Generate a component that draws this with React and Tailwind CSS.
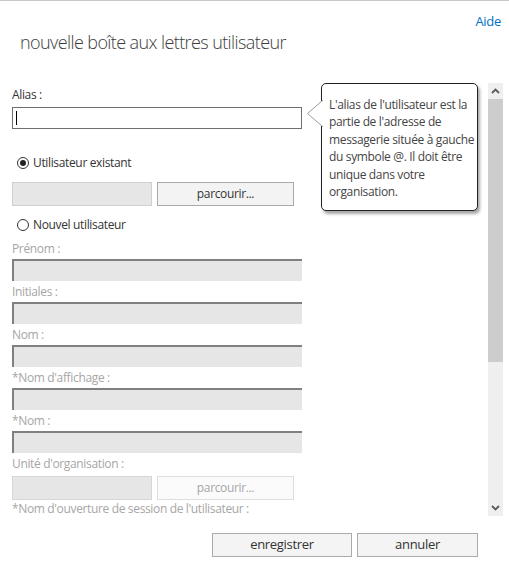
import React from "react";

const FONT = { fontFamily: '"Segoe UI", "Open Sans", "Noto Sans", sans-serif' };

function Radio({ checked, label }) {
  return (
    <div className="flex items-center h-[20px] pl-[5px] gap-[4px] text-[12px] tracking-[-0.35px] text-[#333]">
      <span className="w-[12px] h-[12px] rounded-full border border-[#333] bg-white flex items-center justify-center">
        {checked && <span className="w-[6px] h-[6px] rounded-full bg-[#222]" />}
      </span>
      <span>{label}</span>
    </div>
  );
}

function DisabledField({ label }) {
  return (
    <div>
      <div className="h-[21px] leading-[21px] text-[12px] tracking-[-0.35px] text-[#a6a6a6]">{label}</div>
      <div className="w-[290px] h-[22px] bg-[#e6e6e6] border-t-2 border-l-2 border-[#808080]" />
    </div>
  );
}

function Chevron({ down }) {
  return (
    <svg width="9" height="6" viewBox="0 0 9 6" className={down ? "rotate-180" : ""}>
      <path d="M1 5 L4.5 1.5 L8 5" fill="none" stroke="#5a5a5a" strokeWidth="1.8" />
    </svg>
  );
}

export default function App() {
  return (
    <div className="w-[509px] h-[565px] bg-white border-t border-[#c8c8c8] flex flex-col overflow-hidden" style={FONT}>
      {/* header */}
      <div className="h-[82px]">
        <div className="flex justify-end pr-[8px] pt-[12px] text-[13px] tracking-[-0.3px] text-[#0072c6] leading-[16px]">Aide</div>
        <h1 className="pl-[20px] mt-[1px] text-[18px] font-light tracking-[-0.6px] text-[#3c3c3c] leading-[24px]">
          nouvelle boîte aux lettres utilisateur
        </h1>
      </div>

      {/* scroll region */}
      <div className="flex h-[433px]">
        <div className="relative flex-1 overflow-hidden pl-[12px]">
          <div className="h-[21px] mt-[1px] leading-[21px] text-[12px] tracking-[-0.35px] text-[#333]">Alias :</div>
          <div className="mt-[2px] w-[290px] h-[22px] border border-[#6f6f6f] bg-white flex items-center pl-[3px]">
            <span className="w-[1px] h-[14px] bg-black" />
          </div>

          <div className="mt-[24px]">
            <Radio checked label="Utilisateur existant" />
          </div>
          <div className="mt-[9px] flex gap-[5px] h-[24px]">
            <div className="w-[140px] bg-[#e6e6e6] border border-[#d0d0d0]" />
            <button className="w-[137px] bg-[#f3f3f3] border border-[#a9a9a9] text-[12px] tracking-[-0.35px] text-[#333]">
              parcourir...
            </button>
          </div>
          <div className="mt-[9px]">
            <Radio label="Nouvel utilisateur" />
          </div>

          <div className="mt-[3px]">
            <DisabledField label="Prénom :" />
            <DisabledField label="Initiales :" />
            <DisabledField label="Nom :" />
            <DisabledField label="*Nom d'affichage :" />
            <DisabledField label="*Nom :" />
            <div className="h-[22px] leading-[22px] text-[12px] tracking-[-0.35px] text-[#a6a6a6]">Unité d'organisation :</div>
            <div className="mt-[1px] flex gap-[5px] h-[24px]">
              <div className="w-[140px] bg-[#e6e6e6] border border-[#d6d6d6]" />
              <button className="w-[137px] bg-[#fbfbfb] border border-[#dedede] text-[12px] tracking-[-0.35px] text-[#a6a6a6]">
                parcourir...
              </button>
            </div>
            <div className="mt-[1px] h-[16px] leading-[16px] text-[12px] tracking-[-0.35px] text-[#a6a6a6]">
              *Nom d'ouverture de session de l'utilisateur :
            </div>
          </div>

          {/* tooltip */}
          <div className="absolute left-[321px] top-0 w-[157px] h-[128px] bg-white border border-[#222] rounded-[5px] shadow-[2px_3px_3px_rgba(0,0,0,0.35)] pl-[7px] pr-[2px] pt-[12px] text-[12px] tracking-[-0.35px] leading-[17.4px] text-[#444]">
            L'alias de l'utilisateur est la partie de l'adresse de messagerie située à gauche du symbole @. Il doit être unique dans votre organisation.
          </div>
          <svg className="absolute left-[307px] top-[17px]" width="16" height="27" viewBox="0 0 16 27">
            <polygon points="15.5,0.5 0.5,13.5 15.5,26.5" fill="white" stroke="#9a9a9a" strokeWidth="1" />
            <rect x="14.6" y="1.2" width="2" height="24.6" fill="white" />
          </svg>
        </div>

        {/* scrollbar */}
        <div className="w-[15px] mr-[6px] flex flex-col bg-[#efefef]">
          <div className="h-[16px] flex items-center justify-center"><Chevron /></div>
          <div className="h-[263px] bg-[#cdcdcd]" />
          <div className="flex-1" />
          <div className="h-[16px] flex items-center justify-center"><Chevron down /></div>
        </div>
      </div>

      {/* footer */}
      <div className="flex justify-end gap-[5px] pr-[31px] pt-[17px]">
        <button className="w-[140px] h-[24px] bg-[#f4f4f4] border border-[#ababab] text-[13px] tracking-[-0.3px] text-[#333]">enregistrer</button>
        <button className="w-[121px] h-[24px] bg-[#f4f4f4] border border-[#ababab] text-[13px] tracking-[-0.3px] text-[#333]">annuler</button>
      </div>
    </div>
  );
}
